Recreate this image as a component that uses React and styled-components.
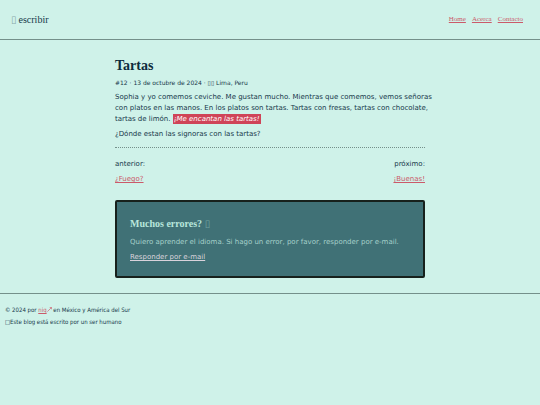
import React from 'react';
import styled, { createGlobalStyle } from 'styled-components';

const GlobalStyle = createGlobalStyle`
  :root {
    --background: #cff2e9;
    --text: #16384a;
    --heading: #0d2c3c;
    --accent: #cf4458;
    --link: #cb5a6a;
    --panel: #407176;
    --line: #74908a;
  }

  * {
    box-sizing: border-box;
  }

  body {
    margin: 0;
    background: var(--background);
    color: var(--text);
    font: 7px/11px "DejaVu Sans", sans-serif;
  }

  h1, h2, p {
    margin: 0;
  }
`;

const serif = '"Liberation Serif", "Times New Roman", serif';

const Link = styled.a`
  color: ${({ $light }) => ($light ? '#d9d3dc' : 'var(--link)')};
  text-decoration: underline;
`;

const Header = styled.header`
  display: flex;
  align-items: center;
  justify-content: space-between;
  height: 40px;
  padding: 0 17px 0 11px;
  border-bottom: 1px solid var(--line);
  font-family: ${serif};
`;

const Logo = styled.a`
  display: flex;
  align-items: center;
  gap: 2px;
  color: var(--text);
  font-size: 10px;
  text-decoration: none;
`;

const Symbol = styled.span`
  font: 10px/11px "DejaVu Sans", sans-serif;
  opacity: 0.4;
`;

const Nav = styled.nav`
  display: flex;
  gap: 6px;
`;

const Main = styled.main`
  width: 100%;
  max-width: 310px;
  margin: 0 auto;
  padding: 18px 0 15px;
`;

const Title = styled.h1`
  color: var(--heading);
  font: bold 14px/16px ${serif};
`;

const Meta = styled.p`
  margin: 3px 0 4px;
  font-size: 6px;
`;

const Paragraph = styled.p`
  margin-bottom: 4px;
  white-space: nowrap;
`;

const Highlight = styled.em`
  padding: 1px;
  background: var(--accent);
  color: #fff;
`;

const Pager = styled.nav`
  display: flex;
  justify-content: space-between;
  margin-top: 7px;
  padding-top: 11px;
  border-top: 1px dotted var(--line);
`;

const PagerItem = styled.div`
  text-align: ${({ $align }) => $align || 'left'};
`;

const Panel = styled.section`
  margin-top: 11px;
  padding: 15px 13px 9px;
  border: 2px solid #17211c;
  border-radius: 2px;
  background: var(--panel);
  color: #a5d0ca;
`;

const PanelTitle = styled.h2`
  margin-bottom: 6px;
  color: #b8e6dc;
  font: bold 10px/14px ${serif};
`;

const Footer = styled.footer`
  padding: 10px 5px;
  border-top: 1px solid var(--line);
  font: 6px/12px "DejaVu Sans Condensed", "DejaVu Sans", sans-serif;
`;

const Arrow = () => (
  <svg width="5" height="5" viewBox="0 0 6 6" fill="none" stroke="currentColor" strokeWidth="0.8" aria-hidden="true">
    <path d="M0.5 5.5 5.3 0.7M3.3 0.6h2.1v2.1" />
  </svg>
);

const App = () => (
  <>
    <GlobalStyle />
    <Header>
      <Logo href="#home"><Symbol>▯</Symbol>escribir</Logo>
      <Nav>
        <Link href="#home">Home</Link>
        <Link href="#acerca">Acerca</Link>
        <Link href="#contacto">Contacto</Link>
      </Nav>
    </Header>

    <Main>
      <article>
        <Title>Tartas</Title>
        <Meta>#12 · 13 de octubre de 2024 · ▯▯ Lima, Peru</Meta>
        <Paragraph>
          Sophia y yo comemos ceviche. Me gustan mucho. Mientras que comemos, vemos señoras
          <br />
          con platos en las manos. En los platos son tartas. Tartas con fresas, tartas con chocolate,
          <br />
          tartas de limón. <Highlight>¡Me encantan las tartas!</Highlight>
        </Paragraph>
        <Paragraph>¿Dónde estan las signoras con las tartas?</Paragraph>
      </article>

      <Pager>
        <PagerItem>
          <Paragraph>anterior:</Paragraph>
          <Paragraph><Link href="#fuego">¿Fuego?</Link></Paragraph>
        </PagerItem>
        <PagerItem $align="right">
          <Paragraph>próximo:</Paragraph>
          <Paragraph><Link href="#buenas">¡Buenas!</Link></Paragraph>
        </PagerItem>
      </Pager>

      <Panel>
        <PanelTitle>Muchos errores? <Symbol>▯</Symbol></PanelTitle>
        <Paragraph>
          Quiero aprender el idioma. Si hago un error, por favor, responder por e-mail.
        </Paragraph>
        <Paragraph><Link $light href="#responder">Responder por e-mail</Link></Paragraph>
      </Panel>
    </Main>

    <Footer>
      <p>© 2024 por <Link href="#niq">niq<Arrow /></Link> en México y América del Sur</p>
      <p>□Este blog está escrito por un ser humano</p>
    </Footer>
  </>
);

export default App;
